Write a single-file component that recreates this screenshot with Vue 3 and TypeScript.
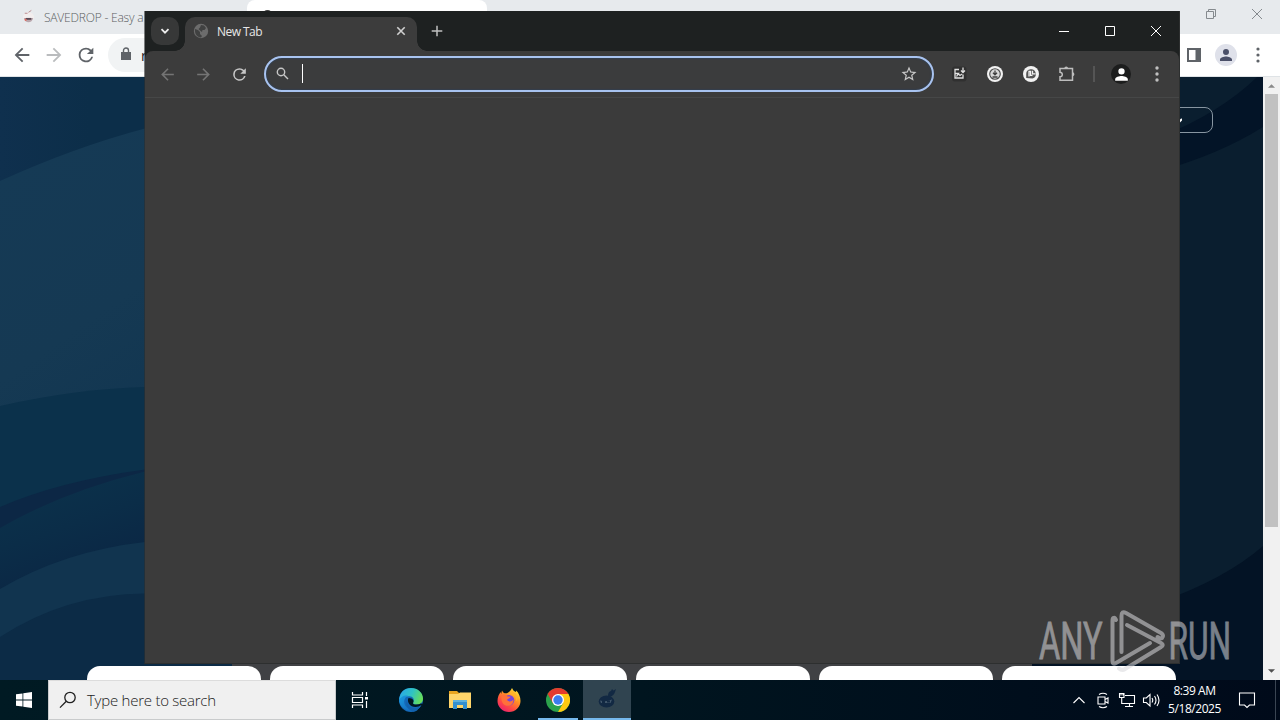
<script setup lang="ts">
interface Wave { d: string; fill: string }

const waves: Wave[] = [
  { d: 'M0 104 Q75 70 145 51.500 L520 0 H1100 L1100 603 H0 Z', fill: 'url(#band)' },
  { d: 'M0 329 Q75 312 145 310 H400 V603 H0 Z', fill: '#0b314b' },
  { d: 'M0 430 Q60 404 145 392.500 H300 V603 H0 Z', fill: '#0c2745' },
  { d: 'M0 451 Q62 415 145 394.500 H300 V603 H0 Z', fill: 'url(#fade)' },
  { d: 'M0 512 Q64 474 145 465 H300 V603 H0 Z', fill: '#11344f' },
  { d: 'M0 560 Q66 517 145 516.500 H300 V603 H0 Z', fill: '#0c2b46' },
  { d: 'M1100 0 H1263 V603 H1100 Z', fill: '#0a1e2f' },
  { d: 'M1257 0 Q1220 36 1160 60 V94 Q1220 77 1263 50 V0 Z', fill: '#031427' },
  { d: 'M1263 469 Q1225 502 1160 525 L1020 570 V603 H1263 Z', fill: '#031325' },
]
const cards = [1, 2, 3, 4, 5, 6]

const arrowBack = 'M20 11H7.830l5.590-5.590L12 4l-8 8 8 8 1.410-1.410L7.830 13H20v-2z'
const arrowForward = 'M12 4l-1.410 1.410L16.170 11H4v2h12.170l-5.580 5.590L12 20l8-8z'
const reload = 'M17.650 6.350A7.960 7.960 0 0 0 12 4a8 8 0 1 0 7.730 10h-2.080A6 6 0 1 1 12 6c1.660 0 3.140.690 4.220 1.780L13 11h7V4l-2.350 2.350z'
const person = 'M12 12a4 4 0 1 0 0-8 4 4 0 0 0 0 8zm0 2c-2.670 0-8 1.340-8 4v2h16v-2c0-2.660-5.330-4-8-4z'
</script>

<template>
  <div class="desktop">
    <section class="back-window">
      <header class="back-tabs">
        <div class="back-tab">
          <svg class="favicon" viewBox="0 0 16 16">
            <ellipse cx="8" cy="8" rx="6" ry="5" fill="#f3eeee" />
            <path d="M3 9c1 6 9 6 10 0z" fill="#b9a7ad" />
            <path d="M5 9h6v2H5z" fill="#5b4a55" />
            <path d="M8 3l3-2M4 4h3" stroke="#b88789" />
            <circle cx="5" cy="11" r="1.200" fill="#df6a60" />
          </svg>
          <span>SAVEDROP - Easy a</span>
        </div>
        <div class="back-tab-active"><i></i></div>
        <div class="back-controls">
          <svg viewBox="0 0 12 12"><path d="M1.500 3.500h7v7h-7zM3.500 3.500v-2h7v7h-2" /></svg>
          <svg viewBox="0 0 12 12"><path d="M1 1l10 10M11 1L1 11" /></svg>
        </div>
      </header>
      <div class="back-toolbar">
        <svg class="nav" viewBox="0 0 24 24"><path :d="arrowBack" fill="#5f6368" /></svg>
        <svg class="nav" viewBox="0 0 24 24"><path :d="arrowForward" fill="#babcbe" /></svg>
        <svg class="nav" viewBox="0 0 24 24"><path :d="reload" fill="#5f6368" /></svg>
        <div class="back-omnibox">
          <svg viewBox="0 0 12 14"><path d="M1 5h10v8H1z" fill="#5f6368" /><path d="M3.500 6V3.500a2.500 2.500 0 0 1 5 0V6" fill="none" stroke="#5f6368" stroke-width="1.400" /></svg>
          <span>r</span>
        </div>
        <div class="back-actions">
          <svg class="panel-icon" viewBox="0 0 14 14"><path d="M0 0h14v14H0z" fill="#5f6368" /><path d="M2 2h6.500v10H2z" fill="#fff" /></svg>
          <div class="avatar"><svg viewBox="0 0 24 24"><path :d="person" fill="#4a4f68" /></svg></div>
          <svg class="dots" viewBox="0 0 4 16"><circle cx="2" cy="2" r="1.600" /><circle cx="2" cy="8" r="1.600" /><circle cx="2" cy="14" r="1.600" /></svg>
        </div>
      </div>
      <div class="page">
        <div class="page-view">
          <svg class="waves" viewBox="0 0 1263 603" preserveAspectRatio="none">
            <defs>
              <linearGradient id="band" gradientUnits="userSpaceOnUse" x1="0" y1="100" x2="160" y2="330">
                <stop offset="0" stop-color="#153a55" /><stop offset=".6" stop-color="#153953" /><stop offset="1" stop-color="#123651" />
              </linearGradient>
              <linearGradient id="fade" gradientUnits="userSpaceOnUse" x1="50" y1="420" x2="75" y2="490">
                <stop offset="0" stop-color="#0b304a" /><stop offset=".45" stop-color="#0b2d48" /><stop offset="1" stop-color="#0b2845" />
              </linearGradient>
            </defs>
            <path v-for="(wave, i) in waves" :key="i" :d="wave.d" :fill="wave.fill" />
          </svg>
          <div class="language"><svg viewBox="0 0 8 6"><path d="M0 1l4 4 4-4" /></svg></div>
          <div class="panel"></div>
          <div class="cards"><div v-for="card in cards" :key="card" class="card"></div></div>
        </div>
        <div class="scrollbar">
          <svg viewBox="0 0 8 4"><path d="M0 4l4-4 4 4z" fill="#8a8a8a" /></svg>
          <div class="thumb"></div>
          <svg viewBox="0 0 8 4"><path d="M0 0l4 4 4-4z" fill="#505050" /></svg>
        </div>
      </div>
    </section>

    <section class="front-window">
      <header class="tabs">
        <div class="tab-search"><svg viewBox="0 0 10 10"><path d="M1.500 3.200L5 6.700l3.500-3.500" /></svg></div>
        <div class="tab">
          <svg class="globe" viewBox="0 0 16 16">
            <circle cx="8" cy="8" r="7.200" fill="#6c6c6c" />
            <path d="M2 6l3 1 2 2v2l2 2-1 1.500C4 14 2 11 2 8zM8 2l3 .500 2 2.500-1.500 2-2 0-.500 2-2-1.500L5.500 6 7 4.500z" fill="#404141" />
          </svg>
          <span>New Tab</span>
          <svg class="tab-close" viewBox="0 0 10 10"><path d="M1.300 1.300l7.400 7.400M8.700 1.300L1.300 8.700" /></svg>
        </div>
        <svg class="new-tab" viewBox="0 0 12 12"><path d="M6 .7v10.600M.7 6h10.600" /></svg>
        <div class="controls">
          <svg viewBox="0 0 12 12"><path d="M1 6.500h10" /></svg>
          <svg viewBox="0 0 12 12"><path d="M1.500 1.500h9v9h-9z" /></svg>
          <svg viewBox="0 0 12 12"><path d="M1 1l10 10M11 1L1 11" /></svg>
        </div>
      </header>
      <div class="toolbar">
        <svg class="tool" viewBox="0 0 24 24"><path :d="arrowBack" fill="#747474" /></svg>
        <svg class="tool" viewBox="0 0 24 24"><path :d="arrowForward" fill="#747474" /></svg>
        <svg class="tool" viewBox="0 0 24 24"><path :d="reload" fill="#c7c7c7" /></svg>
        <div class="omnibox">
          <svg class="magnifier" viewBox="0 0 13 13"><circle cx="5" cy="5" r="3.700" /><path d="M7.800 7.800l4.200 4.200" /></svg>
          <i class="caret"></i>
          <svg class="star" viewBox="0 0 24 24"><path d="M22 9.240l-7.190-.620L12 2 9.190 8.630 2 9.240l5.460 4.730L5.820 21 12 17.270 18.180 21l-1.630-7.030L22 9.240zM12 15.400l-3.760 2.270 1-4.280-3.320-2.880 4.380-.380L12 6.100l1.710 4.040 4.380.380-3.320 2.880 1 4.280L12 15.400z" fill="#c7c7c7" /></svg>
        </div>
        <svg class="ext" viewBox="0 0 18 18">
          <rect x="2" y="1.500" width="14.500" height="15" rx="3" fill="#303030" />
          <path d="M9 4.500H5v8.500h8V9.500M5.500 8.500h3l-2 3M8.500 9l1.500 1.500L12 9M13 2.500v5M11 5.500l2 2 2-2" fill="none" stroke="#e0e0e0" stroke-width="1.300" />
        </svg>
        <svg class="ext" viewBox="0 0 18 18">
          <circle cx="9" cy="9" r="8" fill="#f2f2f2" /><circle cx="9" cy="9" r="5.300" fill="#d8d8d8" stroke="#4a4a4a" stroke-width="1.100" />
          <path d="M9 5.500v4M7 7.800l2 2 2-2M6.500 12h5" fill="none" stroke="#404040" stroke-width="1.300" />
        </svg>
        <svg class="ext" viewBox="0 0 18 18">
          <circle cx="9" cy="9" r="8" fill="#f2f2f2" />
          <path d="M4.200 13V9a4.800 4.800 0 1 1 6.300 4.600z" fill="#555" />
          <path d="M7 11.500V6.300h1.500v4h2M10.500 5.800v3h3" fill="none" stroke="#f2f2f2" stroke-width="1.300" />
        </svg>
        <svg class="puzzle" viewBox="0 0 18 18">
          <path d="M2 3.500h12.500v11.800H2v-3.500a2.100 2.100 0 0 0 0-4.600z" />
          <path class="knob" d="M6.300 3.500a1.900 1.900 0 0 1 3.800 0zM14.500 7.300a1.900 1.900 0 0 1 0 3.800z" />
        </svg>
        <i class="divider"></i>
        <div class="profile"><svg viewBox="0 0 24 24"><path :d="person" fill="#fff" /></svg></div>
        <svg class="menu-dots" viewBox="0 0 4 16"><circle cx="2" cy="2" r="1.700" /><circle cx="2" cy="8" r="1.700" /><circle cx="2" cy="14" r="1.700" /></svg>
      </div>
      <div class="blank"></div>
    </section>

    <footer class="taskbar">
      <div class="start"><svg viewBox="0 0 16 16"><path d="M0 2.300L6.500 1.400v6.200H0zM7.300 1.300L16 0v7.600H7.300zM0 8.400h6.500v6.200L0 13.700zM7.300 8.400H16V16l-8.700-1.300z" fill="#fff" /></svg></div>
      <div class="search">
        <svg viewBox="0 0 18 18"><circle cx="11" cy="6.500" r="5.200" /><path d="M7.300 10.300L1 16.600" /></svg>
        <span>Type here to search</span>
      </div>
      <div class="slot first"><svg class="task-view" viewBox="0 0 18 18"><path d="M1.500 1v3h10V1M1.500 17v-3h10v3M1.500 6.500h10v5h-10zM15.500 1v4M15.500 10v7" /><path d="M14 6h3v2.500h-3z" fill="#fff" stroke="none" /></svg></div>
      <div class="slot edge">
        <svg viewBox="0 0 24 24">
          <defs>
            <linearGradient id="edgeTop" x1="0" y1=".3" x2="1" y2=".6"><stop offset="0" stop-color="#2aa9e8" /><stop offset=".5" stop-color="#2fc3c4" /><stop offset="1" stop-color="#6be052" /></linearGradient>
            <linearGradient id="edgeLow" x1="0" y1="0" x2="1" y2="1"><stop offset="0" stop-color="#1b9de2" /><stop offset="1" stop-color="#1260b5" /></linearGradient>
          </defs>
          <circle cx="12" cy="12" r="12" fill="#1469b8" />
          <path d="M0 12C1 4 5 0 12 0c7 0 12 5 12 10.500 0 4-3 6-6.500 6-3 0-4.500-1.200-3.300-2.700 1.500-2.200 0-5.600-4-5.600C6 8.200 2 9.500 0 12z" fill="url(#edgeTop)" />
          <path d="M0 13C1 9 5 7 9 7.700c-5 2.300-5 9.300-.500 12.300 3 2 7 1.600 10 .500A12 12 0 0 1 0 13z" fill="url(#edgeLow)" />
          <path d="M9.500 10c-2 4 1.500 9 7 9 2.500 0 4-.7 6-2-.8 2.300-2.800 4-4.500 5L24 24v-8l-2-.5c-3 1.500-8 1.500-8-.5 1.500-2 0-5-4.500-5z" fill="#001722" />
          <path d="M8.500 11.500c-1.500 5 3 9 8 8.400 2-.2 4-1 5-1.900-1.700 3-4 4.800-7 5.700C8 22 5.500 15 8.500 11.500z" fill="#1262ad" />
        </svg>
      </div>
      <div class="slot">
        <svg viewBox="0 0 24 24">
          <path d="M1 3h8l2 2h11v15H1z" fill="#e9a520" /><path d="M1 6h9l2-1.500h11V20H1z" fill="#ffd56a" />
          <path d="M5 12h14v9h-4v-4H9v4H5z" fill="#3590cf" /><path d="M5 12h14v2H5z" fill="#61b2dc" />
        </svg>
      </div>
      <div class="slot">
        <svg viewBox="0 0 24 24">
          <defs><linearGradient id="fox" x1=".85" y1="0" x2=".2" y2="1"><stop offset="0" stop-color="#fff13c" /><stop offset=".4" stop-color="#ff9125" /><stop offset=".7" stop-color="#ff4a43" /><stop offset="1" stop-color="#e91e72" /></linearGradient></defs>
          <path d="M15 0c1 2 1.500 3 4 4l.3-1.500C22 5.500 23.500 9 23.500 13A11.500 11 0 0 1 .5 13C.5 9 2 6 3.700 4l.5 2L5 2.500C6 4.500 7 5.300 9 5.300 10.500 5.300 13 4 15 0z" fill="url(#fox)" />
          <circle cx="12" cy="12.300" r="5.300" fill="#7545dc" />
          <path d="M5 7c2-1 4-.5 5 1.200l3.500.5c-.3 1.800-3 1.700-3.500 3.300 1.500 2 4.500 2 6.500-.5 0 5-3.500 7-7 6.200C5 17 3.500 11 5 7z" fill="#ff7139" />
          <path d="M12.500 6.500c4-1 7 2 6.500 6.500 1-.5 1.500-1.500 1.700-3C20 6 17 4 14.500 2.500c0 2-1 3-2 4z" fill="#ffb52a" />
        </svg>
      </div>
      <div class="slot chrome">
        <svg viewBox="0 0 24 24">
          <circle cx="12" cy="12" r="12" fill="#2ba24c" />
          <path d="M12 12V6h10.400A12 12 0 0 1 12 24l5.200-9z" fill="#fdc912" />
          <path d="M12 6h10.400A12 12 0 0 0 1.600 6l5.200 9L12 12z" fill="#e33b2e" />
          <circle cx="12" cy="12" r="6" fill="#fff" /><circle cx="12" cy="12" r="4.700" fill="#3b7ded" />
        </svg>
      </div>
      <div class="slot active">
        <svg viewBox="0 0 24 24"><g fill="#122943"><ellipse cx="11.500" cy="14.500" rx="7.800" ry="6" /><path d="M13 9c0-3 1-4.500 3-5l1-2 1.500 1.500L21 2l-1 3c-1 3-3 4-5 5z" /></g><path d="M5 13.500q6 2 12-1l-1.500 3.500H6z" fill="#40566a" /><path d="M7 14h3v2H7zM12 13.500h3v2h-3z" fill="#122943" /></svg>
      </div>
      <div class="tray">
        <svg viewBox="0 0 18 18"><path d="M3.500 12L9 6.500l5.500 5.500" /></svg>
        <svg viewBox="0 0 18 18"><path d="M4 6h7v7H4zM11 8.500l3-1.500v5l-3-1.500M5 3.500Q9 1 13 3.500M5 15.500Q9 18 13 15.500" /></svg>
        <svg viewBox="0 0 18 18"><path d="M7 4.500h9.500v8H6.500M11.500 12.500v3M7 15.500h8M1.500 2.500h4.500v4H1.500zM3.700 6.500v6H6.500M3 2.500v2M5 2.500v2" /></svg>
        <svg viewBox="0 0 18 18"><path d="M1.500 7v4.500h2.800L8 15V3.500L4.300 7zM10 7q1.500 2.200 0 4.500M12.500 5q3 4.200 0 8.500M15 3.500q4 5.700 0 11.500" /></svg>
      </div>
      <div class="clock"><span>8:39 AM</span><span>5/18/2025</span></div>
      <div class="notify"><svg viewBox="0 0 18 18"><path d="M1.500 2h15v12h-5L9 16.500 6.500 14h-5z" /></svg></div>
      <i class="peek"></i>
    </footer>

    <svg class="watermark" viewBox="0 0 200 66">
      <g class="mark-text">
        <text transform="translate(4 51) scale(.627 1)">ANY</text>
        <text transform="translate(133.500 51) scale(.61 1)">RUN</text>
      </g>
      <path class="mark-line" d="M81 12Q80 9 78.500 10Q77.500 10 77.500 13V53Q77.500 57 81 55L115 35M86.500 44V8Q86.500 2.500 91 5L126 25Q129.500 27.500 127 30Q125.500 31 122.500 29M92 17L126 35Q129.500 37 126 39L90 61Q87 63 84 60.500" />
    </svg>
  </div>
</template>

<style>
html, body { margin: 0; overflow: hidden; }
</style>

<style scoped>
* { box-sizing: border-box; }
svg { display: block; flex: none; }
.desktop { position: relative; width: 1280px; height: 720px; overflow: hidden; font-family: "Open Sans", "Noto Sans", sans-serif; }

.back-window { position: absolute; inset: 0 0 40px 0; display: flex; flex-direction: column; background: #fff; }
.back-tabs { height: 34px; display: flex; background: #e7eaed; }
.back-tab { width: 247px; height: 34px; padding-left: 21px; display: flex; align-items: center; gap: 8px; color: #5b5e62; font-size: 12px; font-weight: 300; letter-spacing: -.2px; white-space: nowrap; }
.back-tab .favicon { width: 15px; height: 16px; }
.back-tab-active { width: 240px; height: 34px; padding: 10px 0 0 17px; border-radius: 8px 8px 0 0; background: #fff; }
.back-tab-active i { display: block; width: 7px; height: 3px; border-radius: 3px 3px 0 0; background: #444; }
.back-controls { margin-left: auto; padding: 8px 17px 0 0; display: flex; gap: 34px; }
.back-controls svg { width: 12px; height: 12px; fill: none; stroke: #858a8e; stroke-width: 1; }
.back-toolbar { height: 43px; padding-left: 11px; display: flex; align-items: center; gap: 10px; border-bottom: 1px solid #dfe3e6; }
.nav { width: 22px; height: 22px; }
.back-omnibox { width: 900px; height: 34px; margin-left: 1px; padding-left: 12px; display: flex; align-items: center; gap: 9px; border-radius: 17px; background: #f1f3f4; font-size: 14px; color: #202124; }
.back-omnibox svg { width: 12px; height: 14px; margin-top: -2px; }
.back-actions { margin-left: auto; padding-right: 20px; display: flex; align-items: center; }
.panel-icon { width: 14px; height: 14px; margin-right: 14px; }
.avatar { width: 22px; height: 22px; margin-right: 19px; display: grid; place-items: center; border-radius: 50%; background: #dfe1ea; }
.avatar svg { width: 18px; height: 18px; }
.dots { width: 4px; height: 16px; fill: #5f6368; }
.page { height: 603px; display: flex; }
.page-view { position: relative; width: 1263px; overflow: hidden; background: linear-gradient(90deg, #0f304e 0, #0c2e49 90px, #0c2e49 400px, #0a1e2f 1100px); }
.waves { width: 1263px; height: 603px; }
.language { position: absolute; top: 30px; left: 1090px; width: 123px; height: 26px; border: 1px solid #8795a1; border-radius: 8px; }
.language svg { position: absolute; top: 10px; left: 83px; width: 8px; height: 6px; fill: none; stroke: #fff; stroke-width: 2; }
.panel { position: absolute; left: 232px; bottom: 0; width: 800px; height: 18px; background: #404144; }
.cards { position: absolute; left: 87px; bottom: 0; display: flex; gap: 9px; }
.card { width: 174px; height: 14px; border-radius: 13px 13px 0 0; background: #fff; }
.scrollbar { width: 17px; padding: 7px 0; display: flex; flex-direction: column; align-items: center; background: #f1f1f1; }
.scrollbar svg { width: 7px; height: 4px; }
.thumb { width: 13px; height: 433px; margin: 6px 0 auto; background: #c1c1c1; }

.front-window { position: absolute; left: 144px; top: 11px; width: 1036px; height: 653px; display: flex; flex-direction: column; border: solid #2d2f2f; border-width: 0 1px 1px; border-left-color: #2d2f2f99; background: #1e2121; background-clip: padding-box; }
.tabs { height: 40px; display: flex; }
.tab-search { width: 28px; height: 28px; margin: 6px 6px 0; display: grid; place-items: center; border-radius: 10px; background: #373838; }
.tab-search svg { width: 10px; height: 10px; fill: none; stroke: #eee; stroke-width: 1.8; }
.tab { position: relative; width: 232px; height: 34px; margin-top: 6px; padding: 0 11px 6px 8px; display: flex; align-items: center; border-radius: 10px 10px 0 0; background: #3c3c3c; color: #e7e7e7; font-size: 12px; letter-spacing: -.55px; }
.tab::before, .tab::after { content: ""; position: absolute; bottom: 0; width: 10px; height: 10px; }
.tab::before { left: -10px; background: radial-gradient(circle at 0 0, transparent 9.5px, #3c3c3c 10px); }
.tab::after { right: -10px; background: radial-gradient(circle at 100% 0, transparent 9.5px, #3c3c3c 10px); }
.globe { width: 16px; height: 16px; margin-right: 8px; }
.tab-close { width: 10px; height: 10px; margin-left: auto; fill: none; stroke: #d0d0d0; stroke-width: 1.6; }
.new-tab { width: 12px; height: 12px; margin: 14px 0 0 14px; fill: none; stroke: #c0c0c0; stroke-width: 1.5; }
.controls { margin-left: auto; padding: 14px 17px 0 0; display: flex; gap: 34px; }
.controls svg { width: 12px; height: 12px; fill: none; stroke: #fff; stroke-width: 1; }
.toolbar { height: 47px; padding-left: 13px; display: flex; align-items: center; border-radius: 8px 8px 0 0; border-bottom: 1px solid #464747; background: #3c3c3c; }
.tool { width: 19px; height: 19px; margin-right: 17px; }
.omnibox { width: 670px; height: 36px; margin: -1px 16px 0 -2px; padding: 0 14px 0 10px; display: flex; align-items: center; border: 2px solid #a8c3f0; border-radius: 18px; background: #3b3c3d; box-shadow: inset 0 0 2px #254773; }
.magnifier { width: 13px; height: 13px; fill: none; stroke: #c7c7c7; stroke-width: 1.4; }
.caret { width: 1px; height: 19px; margin-left: 13px; background: #fff; }
.star { width: 18px; height: 18px; margin-left: auto; }
.ext { width: 18px; height: 18px; margin-right: 18px; }
.puzzle { width: 18px; height: 18px; margin-right: 18px; fill: none; stroke: #bdbdbd; stroke-width: 1.5; }
.puzzle .knob { fill: #bdbdbd; stroke: none; }
.divider { width: 2px; height: 16px; margin-left: -1px; background: #555; }
.profile { width: 20px; height: 20px; margin-left: 16px; display: grid; place-items: center; border-radius: 50%; background: #1c1d1d; }
.profile svg { width: 19px; height: 19px; }
.menu-dots { width: 4px; height: 16px; margin-left: 24px; fill: #c0c0c0; }
.blank { flex: 1; background: #3b3b3b; }

.taskbar { position: absolute; inset: 680px 0 0 0; display: flex; background: linear-gradient(90deg, #001a23 0, #00151f 50%, #000e1c 80%, #000a1a 100%); }
.start { width: 48px; display: grid; place-items: center; }
.start svg { width: 16px; height: 16px; }
.search { width: 288px; padding-left: 10px; display: flex; align-items: center; gap: 10px; border: 1px solid #c9cbcc; border-top-color: #dcdcdc; background: #f0f0f0; color: #222; font-size: 15px; font-weight: 300; letter-spacing: -.25px; }
.search svg { width: 18px; height: 18px; fill: none; stroke: #202020; stroke-width: 1.3; }
.slot { width: 49px; display: grid; place-items: center; }
.slot svg { width: 24px; height: 24px; }
.slot .task-view { width: 18px; height: 18px; fill: none; stroke: #fff; stroke-width: 1.2; }
.first { width: 48px; }
.edge { margin-left: 2px; }
.chrome { position: relative; }
.chrome::after { content: ""; position: absolute; left: 5px; bottom: 0; width: 40px; height: 2px; background: #76b9ed; }
.active { width: 48px; margin-left: 1px; border-bottom: 2px solid #76b9ed; background: #304450; }
.tray { margin-left: auto; display: flex; align-items: center; gap: 6px; }
.tray svg { width: 18px; height: 18px; fill: none; stroke: #fff; stroke-width: 1.1; }
.clock { width: 69px; display: flex; flex-direction: column; align-items: center; justify-content: center; color: #fff; font-size: 12px; line-height: 18px; letter-spacing: -.45px; white-space: nowrap; }
.notify { width: 36px; display: grid; place-items: center; }
.notify svg { width: 18px; height: 18px; fill: none; stroke: #fff; stroke-width: 1.1; }
.peek { width: 1px; margin: 0 4px 0 10px; background: #3a4553; }

.watermark { position: absolute; left: 1035px; top: 608px; width: 200px; height: 66px; opacity: .55; }
.mark-text { fill: #d8d8dc; stroke: #d8d8dc; stroke-width: .8; font-family: Roboto, sans-serif; font-size: 52px; }
.mark-line { fill: none; stroke: #d8d8dc; stroke-width: 4; stroke-linecap: round; stroke-linejoin: round; }
</style>
